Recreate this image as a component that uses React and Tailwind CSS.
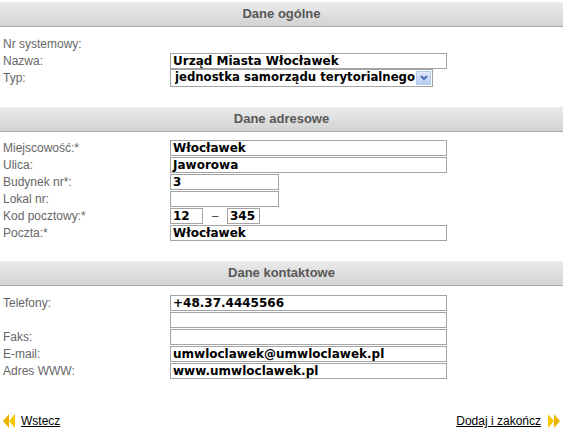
import React from 'react';

const Header = ({ children }) => (
  <div className="h-[25px] flex items-center justify-center border-b border-[#a9a9a9] bg-gradient-to-b from-[#ebebeb] to-[#d3d3d3] font-bold text-[13px] text-[#585858]">
    {children}
  </div>
);

const Row = ({ label, children }) => (
  <div className="flex items-center h-[17px]">
    <div className="w-[170px] pl-[3px] text-[#666]">{label}</div>
    <div className="flex items-center">{children}</div>
  </div>
);

const Box = ({ value = '', w = 'w-[277px]' }) => (
  <div className={`${w} h-[16px] border border-[#a4a4a4] bg-white px-[2px] flex items-center font-['DejaVu_Sans'] font-bold text-[12px] text-black leading-none overflow-hidden whitespace-nowrap`}>
    {value}
  </div>
);

const Arrow = ({ dir }) => (
  <svg width="13" height="14" viewBox="0 0 13 14" className={dir === 'left' ? '' : 'rotate-180'}>
    <polygon points="6,0 6,14 0,7" fill="#e8b400" />
    <polygon points="12,0 12,14 6,7" fill="#f5c800" />
  </svg>
);

export default function App() {
  return (
    <div className="w-[563px] h-[434px] bg-white font-['Liberation_Sans',Arial,sans-serif] text-[12px] pt-[2px]">
      <Header>Dane ogólne</Header>
      <div className="pt-[8px]">
        <Row label="Nr systemowy:" />
        <Row label="Nazwa:">
          <Box value="Urząd Miasta Włocławek" />
        </Row>
        <Row label="Typ:">
          <div className="w-[263px] h-[18px] border border-[#a4a4a4] bg-white flex items-center pl-[4px] font-['DejaVu_Sans'] font-bold text-[11.7px] text-black">
            <span className="flex-1 whitespace-nowrap overflow-hidden">jednostka samorządu terytorialnego</span>
            <span className="w-[15px] h-[14px] mr-[1px] bg-gradient-to-b from-[#dfe9fb] to-[#b9cdf1] border border-[#b5c8ee] flex items-center justify-center">
              <svg width="8" height="6" viewBox="0 0 8 6">
                <polyline points="1,1 4,4 7,1" fill="none" stroke="#4d6fb7" strokeWidth="2" />
              </svg>
            </span>
          </div>
        </Row>
      </div>

      <div className="mt-[21px]">
        <Header>Dane adresowe</Header>
      </div>
      <div className="pt-[7px]">
        <Row label="Miejscowość:*">
          <Box value="Włocławek" />
        </Row>
        <Row label="Ulica:">
          <Box value="Jaworowa" />
        </Row>
        <Row label="Budynek nr*:">
          <Box value="3" w="w-[109px]" />
        </Row>
        <Row label="Lokal nr:">
          <Box w="w-[109px]" />
        </Row>
        <Row label="Kod pocztowy:*">
          <Box value="12" w="w-[33px]" />
          <span className="w-[24px] text-center text-[#444]">–</span>
          <Box value="345" w="w-[33px]" />
        </Row>
        <Row label="Poczta:*">
          <Box value="Włocławek" />
        </Row>
      </div>

      <div className="mt-[20px]">
        <Header>Dane kontaktowe</Header>
      </div>
      <div className="pt-[8px]">
        <Row label="Telefony:">
          <Box value="+48.37.4445566" />
        </Row>
        <Row label="">
          <Box />
        </Row>
        <Row label="Faks:">
          <Box />
        </Row>
        <Row label="E-mail:">
          <Box value="umwloclawek@umwloclawek.pl" />
        </Row>
        <Row label="Adres WWW:">
          <Box value="www.umwloclawek.pl" />
        </Row>
      </div>

      <div className="mt-[33px] flex items-center justify-between px-[3px] text-black">
        <a href="#" className="flex items-center gap-[5px]">
          <Arrow dir="left" />
          <span className="underline">Wstecz</span>
        </a>
        <a href="#" className="flex items-center gap-[6px]">
          <span className="underline">Dodaj i zakończ</span>
          <Arrow dir="right" />
        </a>
      </div>
    </div>
  );
}
